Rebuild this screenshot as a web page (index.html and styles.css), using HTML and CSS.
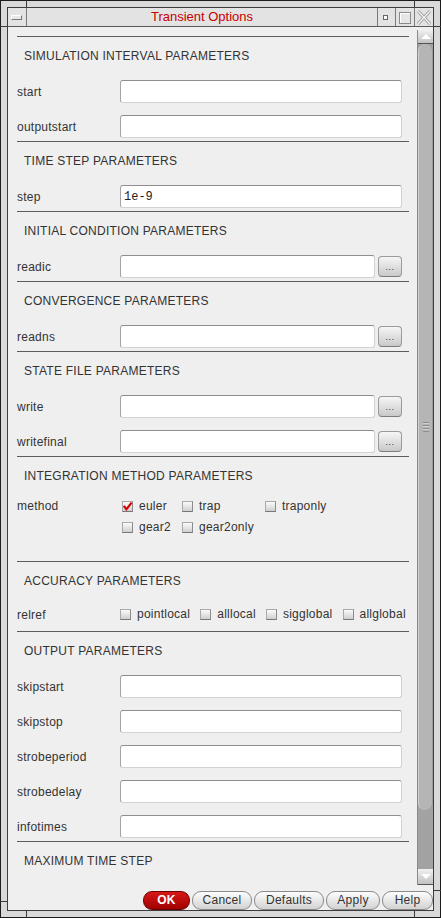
FILE: index.html
```html
<!DOCTYPE html>
<html>
<head>
<meta charset="utf-8">
<title>Transient Options</title>
<link rel="stylesheet" href="styles.css">
</head>
<body>
<div class="window">
  <div class="tick v tl"></div>
  <div class="tick v tr"></div>
  <div class="tick v bl"></div>
  <div class="tick v br"></div>
  <div class="tick h lt"></div>
  <div class="tick h rt"></div>
  <div class="tick h lb"></div>
  <div class="tick h rb"></div>
  <div class="inner">
    <div class="titlebar">
      <div class="tb-btn menu"><span class="menu-bar"></span></div>
      <div class="title">Transient Options</div>
      <div class="tb-btn min"><span class="min-box"></span></div>
      <div class="tb-btn max"><span class="max-box"></span></div>
      <div class="tb-btn close">
        <svg width="18" height="18" viewBox="0 0 18 18">
          <path d="M3 3 L15 16 M15 3 L3 16" stroke="#9a9a9a" stroke-width="3.2" fill="none"/>
          <path d="M3 3 L15 16 M15 3 L3 16" stroke="#f2f2f2" stroke-width="1.4" fill="none"/>
        </svg>
      </div>
    </div>
    <div class="content">
      <div class="main">
        <div class="scrollarea">
          <section class="sect">
            <div class="sect-head">SIMULATION INTERVAL PARAMETERS</div>
            <div class="field"><label>start</label><input class="txt" type="text"></div>
            <div class="field"><label>outputstart</label><input class="txt" type="text"></div>
          </section>
          <section class="sect">
            <div class="sect-head">TIME STEP PARAMETERS</div>
            <div class="field"><label>step</label><input class="txt" type="text" value="1e-9"></div>
          </section>
          <section class="sect">
            <div class="sect-head">INITIAL CONDITION PARAMETERS</div>
            <div class="field"><label>readic</label><input class="txt short" type="text"><span class="dots">...</span></div>
          </section>
          <section class="sect">
            <div class="sect-head">CONVERGENCE PARAMETERS</div>
            <div class="field"><label>readns</label><input class="txt short" type="text"><span class="dots">...</span></div>
          </section>
          <section class="sect">
            <div class="sect-head">STATE FILE PARAMETERS</div>
            <div class="field"><label>write</label><input class="txt short" type="text"><span class="dots">...</span></div>
            <div class="field"><label>writefinal</label><input class="txt short" type="text"><span class="dots">...</span></div>
          </section>
          <section class="sect method">
            <div class="sect-head">INTEGRATION METHOD PARAMETERS</div>
            <div class="field checks">
              <label>method</label>
              <div class="cgrid">
                <span class="opt"><span class="cb on"><svg width="11" height="11" viewBox="0 0 11 11"><path d="M1.8 4.8 L4.4 8.3 L9.6 1.6" stroke="#d40000" stroke-width="2.2" fill="none"/></svg></span>euler</span>
                <span class="opt"><span class="cb"></span>trap</span>
                <span class="opt"><span class="cb"></span>traponly</span>
                <span class="opt"><span class="cb"></span>gear2</span>
                <span class="opt"><span class="cb"></span>gear2only</span>
              </div>
            </div>
          </section>
          <section class="sect acc">
            <div class="sect-head">ACCURACY PARAMETERS</div>
            <div class="field rel">
              <label>relref</label>
              <div class="crow">
                <span class="opt"><span class="cb"></span>pointlocal</span>
                <span class="opt"><span class="cb"></span>alllocal</span>
                <span class="opt"><span class="cb"></span>sigglobal</span>
                <span class="opt"><span class="cb"></span>allglobal</span>
              </div>
            </div>
          </section>
          <section class="sect">
            <div class="sect-head">OUTPUT PARAMETERS</div>
            <div class="field"><label>skipstart</label><input class="txt" type="text"></div>
            <div class="field"><label>skipstop</label><input class="txt" type="text"></div>
            <div class="field"><label>strobeperiod</label><input class="txt" type="text"></div>
            <div class="field"><label>strobedelay</label><input class="txt" type="text"></div>
            <div class="field"><label>infotimes</label><input class="txt" type="text"></div>
          </section>
          <section class="sect">
            <div class="sect-head">MAXIMUM TIME STEP</div>
          </section>
        </div>
        <div class="scrollbar">
          <div class="sb-btn up"><span class="tri-up"></span></div>
          <div class="thumb"><span class="grip"></span></div>
          <div class="trough"></div>
          <div class="sb-btn down"><span class="tri-down"></span></div>
        </div>
      </div>
      <div class="buttons">
        <span class="btn ok">OK</span>
        <span class="btn w-cancel">Cancel</span>
        <span class="btn w-defaults">Defaults</span>
        <span class="btn w-apply">Apply</span>
        <span class="btn w-help">Help</span>
      </div>
    </div>
  </div>
</div>
</body>
</html>
```
FILE: styles.css
```css
html, body {
  margin: 0;
  padding: 0;
  background: #222;
}
body {
  width: 441px;
  height: 918px;
  overflow: hidden;
  font-family: "Liberation Sans", Arial, sans-serif;
  font-size: 12px;
  letter-spacing: 0.25px;
  color: #333;
}
.window {
  position: relative;
  box-sizing: border-box;
  width: 441px;
  height: 918px;
  border: 1px solid #1c1c1c;
  background: #d9d9d9;
  padding: 6px;
}
.tick {
  position: absolute;
  background: #3a3a3a;
}
.tick.v { width: 1px; height: 7px; }
.tick.h { width: 7px; height: 1px; }
.tick.tl { left: 25px; top: -1px; }
.tick.tr { left: 413px; top: -1px; }
.tick.bl { left: 25px; bottom: -1px; }
.tick.br { left: 413px; bottom: -1px; }
.tick.lt { left: -1px; top: 25px; }
.tick.rt { right: -1px; top: 25px; }
.tick.lb { left: -1px; top: 900px; }
.tick.rb { right: -1px; top: 889px; }

.inner {
  box-sizing: border-box;
  height: 904px;
  border: 1px solid #3c3c3c;
  display: flex;
  flex-direction: column;
}
.titlebar {
  display: flex;
  height: 18px;
  flex: none;
  border-bottom: 1px solid #5a5a5a;
  background: #e3e3e3;
}
.tb-btn {
  position: relative;
  width: 18px;
  flex: none;
  border-right: 1px solid #7a7a7a;
}
.tb-btn.min { width: 17px; }
.tb-btn.close { border-right: none; }
.menu-bar {
  position: absolute;
  left: 3px;
  top: 7px;
  width: 11px;
  height: 5px;
  box-sizing: border-box;
  border: 1px solid #777;
  border-top-color: #fff;
  border-left-color: #fff;
  background: #e8e8e8;
}
.min-box {
  position: absolute;
  left: 5px;
  top: 7px;
  width: 5px;
  height: 5px;
  box-sizing: border-box;
  border: 1px solid #666;
  background: #fafafa;
}
.max-box {
  position: absolute;
  left: 3px;
  top: 4px;
  width: 12px;
  height: 12px;
  box-sizing: border-box;
  border: 1px solid #8a8a8a;
  box-shadow: inset 1px 1px 0 #fff;
  background: #e6e6e6;
}
.close svg { display: block; }
.title {
  flex: 1;
  text-align: center;
  color: #c80000;
  font-size: 13px;
  letter-spacing: 0;
  line-height: 18px;
  border-right: 1px solid #7a7a7a;
}

.content {
  flex: 1;
  display: flex;
  flex-direction: column;
  background: #efefef;
  min-height: 0;
}
.main {
  flex: 1;
  display: flex;
  min-height: 0;
}
.scrollarea {
  flex: 1;
  overflow: hidden;
  padding-top: 9px;
  box-sizing: border-box;
}
.sect {
  border-top: 1px solid #5c5c5c;
  margin: 0 8px 0 9px;
  padding-bottom: 3px;
}
.sect.method { padding-bottom: 27px; }
.sect.acc { padding-bottom: 7px; }
.sect-head {
  height: 43px;
  box-sizing: border-box;
  padding: 12px 0 0 7px;
  line-height: 14px;
  color: #333;
  white-space: nowrap;
}
.field {
  display: flex;
  align-items: center;
  height: 23px;
  margin-bottom: 12px;
  white-space: nowrap;
}
.field:last-child { margin-bottom: 0; }
.field label {
  width: 103px;
  flex: none;
}
.txt {
  width: 282px;
  height: 23px;
  box-sizing: border-box;
  margin: 0;
  padding: 0 3px;
  border: 1px solid;
  border-color: #8e8e8e #d2d2d2 #d2d2d2 #a4a4a4;
  border-radius: 3px;
  background: #fff;
  font-family: "Liberation Mono", "Courier New", monospace;
  font-size: 12px;
  letter-spacing: 0;
  color: #222;
  outline: none;
}
.txt.short { width: 255px; }
.dots {
  width: 24px;
  height: 21px;
  margin-left: 3px;
  box-sizing: border-box;
  border: 1px solid #9a9a9a;
  border-bottom-color: #7c7c7c;
  border-radius: 4px;
  background: linear-gradient(#f6f6f6, #c9c9c9);
  text-align: center;
  font-size: 9px;
  line-height: 21px;
  color: #333;
  letter-spacing: 0.5px;
}
.field.checks {
  height: auto;
  align-items: flex-start;
}
.field.checks label { line-height: 13px; }
.cgrid {
  margin-left: 2px;
  display: grid;
  grid-template-columns: auto auto auto;
  justify-content: start;
  column-gap: 11px;
  row-gap: 8px;
}
.opt {
  display: flex;
  align-items: center;
  gap: 6px;
  line-height: 13px;
}
.cb {
  display: block;
  width: 11px;
  height: 11px;
  box-sizing: border-box;
  border: 1px solid #a9a9a9;
  border-bottom-color: #777;
  border-right-color: #8c8c8c;
  background: linear-gradient(#fbfbfb, #cfcfcf);
  flex: none;
}
.cb.on { position: relative; }
.cb.on svg {
  position: absolute;
  left: -1px;
  top: -1px;
}
.field.rel { height: 19px; }
.crow {
  display: flex;
  gap: 10px;
}

.scrollbar {
  width: 15px;
  flex: none;
  margin: 3px 0 2px;
  border-left: 1px solid #8a8a8a;
  display: flex;
  flex-direction: column;
  background: #a2a2a2;
}
.sb-btn {
  flex: none;
  display: flex;
  align-items: center;
  justify-content: center;
  background: linear-gradient(#f0f0f0, #c2c2c2);
  border-bottom: 1px solid #555;
}
.sb-btn.up { height: 13px; }
.sb-btn.down { height: 15px; }
.tri-up {
  width: 0;
  height: 0;
  border-left: 5px solid transparent;
  border-right: 5px solid transparent;
  border-bottom: 5px solid #fff;
}
.tri-down {
  width: 0;
  height: 0;
  border-left: 5px solid transparent;
  border-right: 5px solid transparent;
  border-top: 5px solid #fff;
}
.thumb {
  height: 766px;
  flex: none;
  box-sizing: border-box;
  border-radius: 7px;
  background: #b5b5b5;
  border-left: 1px solid #cfcfcf;
  border-right: 1px solid #9a9a9a;
  display: flex;
  align-items: center;
  justify-content: center;
}
.grip {
  width: 6px;
  height: 10px;
  background: repeating-linear-gradient(#8e8e8e 0 1px, #d0d0d0 1px 2px, #b5b5b5 2px 3px);
}
.trough { flex: 1; }

.buttons {
  flex: none;
  height: 23px;
  box-sizing: border-box;
  padding-top: 4px;
  display: flex;
  justify-content: flex-end;
  gap: 2px;
}
.btn {
  height: 19px;
  box-sizing: border-box;
  border: 1px solid #8a8a8a;
  border-radius: 9px;
  background: linear-gradient(#fdfdfd, #d2d2d2);
  text-align: center;
  line-height: 17px;
  color: #333;
}
.btn.ok {
  width: 47px;
  background: linear-gradient(#d81818, #a00000);
  border-color: #6a0000;
  color: #fff;
  font-weight: bold;
}
.w-cancel { width: 60px; }
.w-defaults { width: 70px; }
.w-apply { width: 54px; }
.w-help { width: 51px; }
```
